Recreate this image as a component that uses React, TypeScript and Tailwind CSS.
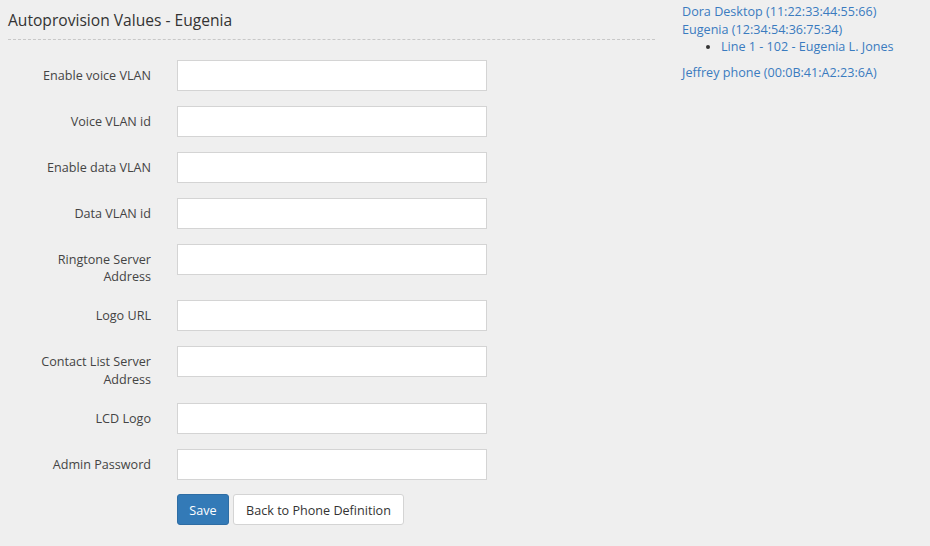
const fields = [
  "Enable voice VLAN",
  "Voice VLAN id",
  "Enable data VLAN",
  "Data VLAN id",
  "Ringtone Server Address",
  "Logo URL",
  "Contact List Server Address",
  "LCD Logo",
  "Admin Password",
];

export default function App() {
  return (
    <div className="min-h-[546px] w-full bg-[#efefef] font-['Open_Sans',sans-serif] text-[#444] flex">
      {/* main form */}
      <div className="w-[655px] pl-[8px]">
        <h2 className="pt-[9px] pb-[8px] text-[15.6px] leading-[22px] text-[#333] border-b border-dashed border-[#c8c8c8]">
          Autoprovision Values - Eugenia
        </h2>
        <form className="pt-[20px]">
          {fields.map((f) => (
            <div key={f} className="flex items-start mb-[15px]">
              <label className="w-[143px] pt-[7px] text-right text-[12.6px] leading-[17.2px] text-[#444] pl-[28px]">
                {f}
              </label>
              <input
                type="text"
                className="ml-[26px] w-[310px] h-[31px] bg-white border border-[#d4d4d4] outline-none"
              />
            </div>
          ))}
          <div className="flex gap-[4px] ml-[169px] -mt-[1px]">
            <button
              type="button"
              className="h-[31px] w-[52px] pt-[4px] rounded-[3px] bg-[#337ab7] border border-[#2e6da4] text-white text-[12.6px]"
            >
              Save
            </button>
            <button
              type="button"
              className="h-[31px] w-[171px] pt-[4px] rounded-[3px] bg-white border border-[#d4d4d4] text-[#333] text-[12.6px]"
            >
              Back to Phone Definition
            </button>
          </div>
        </form>
      </div>

      {/* phone list */}
      <div className="pl-[27px] pt-[3px] text-[12.6px] leading-[17.5px] text-[#3a7bbf]">
        <ul>
          <li>
            <a>Dora Desktop (11:22:33:44:55:66)</a>
          </li>
          <li className="mb-[8px]">
            <a>Eugenia (12:34:54:36:75:34)</a>
            <ul className="list-disc pl-[39px] marker:text-[#333]">
              <li>
                <a>Line 1 - 102 - Eugenia L. Jones</a>
              </li>
            </ul>
          </li>
          <li>
            <a>Jeffrey phone (00:0B:41:A2:23:6A)</a>
          </li>
        </ul>
      </div>
    </div>
  );
}
